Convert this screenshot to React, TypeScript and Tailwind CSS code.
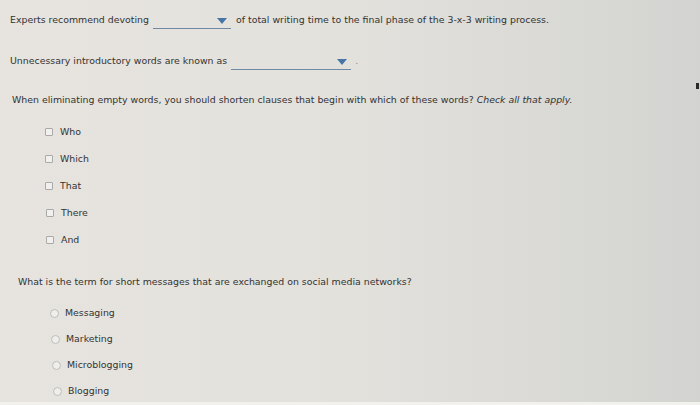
const checks = ['Who', 'Which', 'That', 'There', 'And'];
const radios = ['Messaging', 'Marketing', 'Microblogging', 'Blogging'];

function Dropdown({ width }: { width: string }) {
  return (
    <span className={`relative inline-block h-[15px] border-b border-[#6f8aa6] ${width}`}>
      <svg className="absolute right-[4px] top-[4px]" width="10" height="6" viewBox="0 0 10 6">
        <path d="M0 0 H10 L5 6 Z" fill="#4676a8" />
      </svg>
    </span>
  );
}

export default function App() {
  return (
    <div className="relative w-[700px] h-[405px] overflow-hidden bg-gradient-to-r from-[#e7e4df] via-[#e3e1dc] to-[#d3d4d1] text-[9.4px] leading-[12px] text-[#333333] font-['DejaVu_Sans',Verdana,sans-serif]">
      <div className="flex items-start pl-[10px] pt-[14px]">
        <span>Experts recommend devoting</span>
        <span className="ml-[4px]">
          <Dropdown width="w-[78px]" />
        </span>
        <span className="ml-[5px]">of total writing time to the final phase of the 3-x-3 writing process.</span>
      </div>

      <div className="flex items-start pl-[10px] mt-[23px]">
        <span>Unnecessary introductory words are known as</span>
        <span className="ml-[4px]">
          <Dropdown width="w-[120px]" />
        </span>
        <span className="ml-[4px] text-[#8a8a8a]">.</span>
      </div>

      <div className="pl-[12px] mt-[21px]">
        When eliminating empty words, you should shorten clauses that begin with which of these words?{' '}
        <span className="italic">Check all that apply.</span>
      </div>

      <div className="flex flex-col gap-[15px] pl-[45px] mt-[20px]">
        {checks.map((c, i) => (
          <label key={c} className={`flex items-center gap-[7px] h-[12px] ${i > 2 ? 'pl-[1px]' : ''}`}>
            <span className="w-[8px] h-[8px] border border-[#a9a9a9] rounded-[1px] bg-[#f1f0ee]" />
            <span>{c}</span>
          </label>
        ))}
      </div>

      <div className="pl-[18px] mt-[30px]">
        What is the term for short messages that are exchanged on social media networks?
      </div>

      <div className="flex flex-col gap-[14px] mt-[19px]">
        {radios.map((r, i) => (
          <label
            key={r}
            className={`flex items-center gap-[6px] h-[12px] ${['pl-[50px]', 'pl-[51px]', 'pl-[52px]', 'pl-[53px]'][i]}`}
          >
            <span className="w-[9px] h-[9px] rounded-full border border-[#bdbdbb] bg-[#efeeeb]" />
            <span>{r}</span>
          </label>
        ))}
      </div>

      <span className="absolute right-[1px] top-[83px] w-[3px] h-[6px] bg-[#2a2a2a]" />
      <div className="absolute bottom-0 left-0 right-0 h-[3px] bg-[#f2f1ee]" />
    </div>
  );
}
